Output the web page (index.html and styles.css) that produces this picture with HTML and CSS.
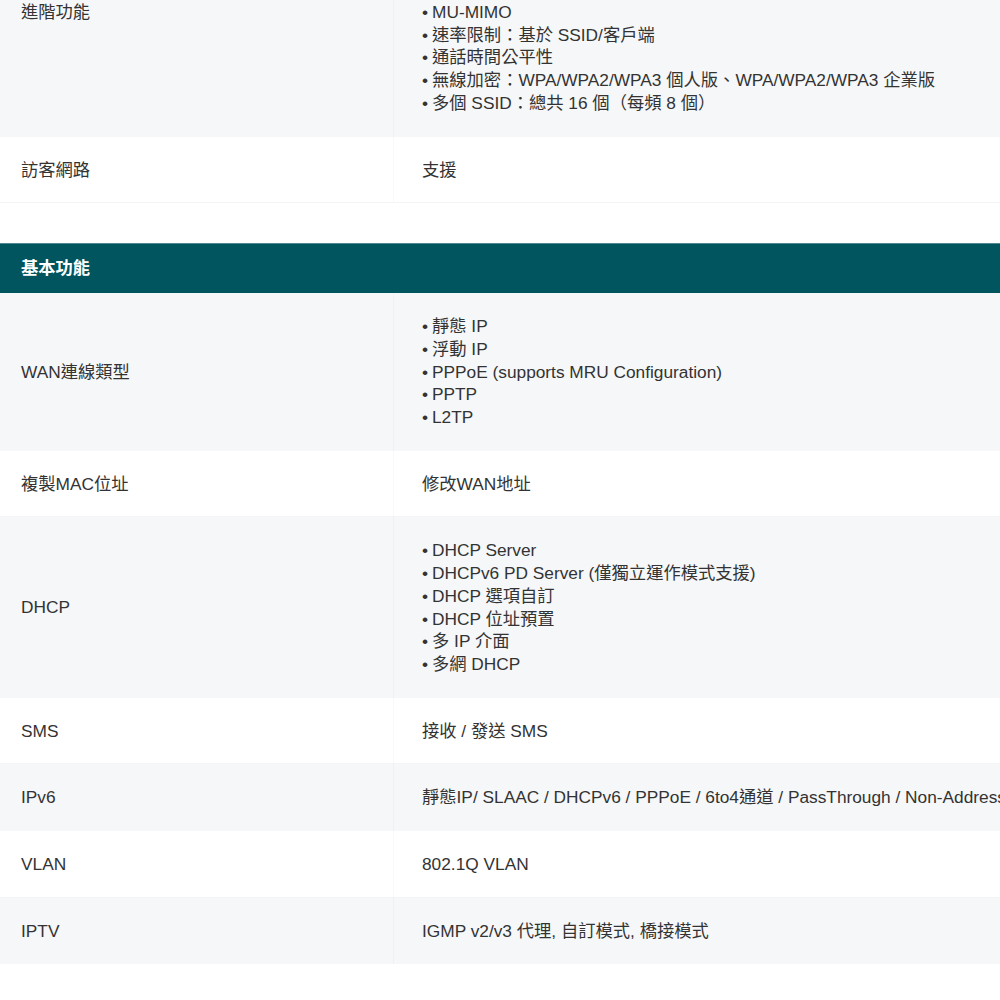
FILE: index.html
```html
<!DOCTYPE html>
<html lang="zh-Hant">
<head>
<meta charset="utf-8">
<title>規格</title>
<link rel="stylesheet" href="styles.css">
</head>
<body>
<div class="spec">
  <div class="row gray first">
    <div class="label">進階功能</div>
    <div class="value">
      <ul class="list">
        <li>MU-MIMO</li>
        <li>速率限制：基於 SSID/客戶端</li>
        <li>通話時間公平性</li>
        <li>無線加密：WPA/WPA2/WPA3 個人版、WPA/WPA2/WPA3 企業版</li>
        <li>多個 SSID：總共 16 個（每頻 8 個）</li>
      </ul>
    </div>
  </div>
  <div class="row white">
    <div class="label">訪客網路</div>
    <div class="value">支援</div>
  </div>

  <div class="section-head">基本功能</div>

  <div class="row gray">
    <div class="label">WAN連線類型</div>
    <div class="value">
      <ul class="list">
        <li>靜態 IP</li>
        <li>浮動 IP</li>
        <li>PPPoE (supports MRU Configuration)</li>
        <li>PPTP</li>
        <li>L2TP</li>
      </ul>
    </div>
  </div>
  <div class="row white">
    <div class="label">複製MAC位址</div>
    <div class="value">修改WAN地址</div>
  </div>
  <div class="row gray">
    <div class="label">DHCP</div>
    <div class="value">
      <ul class="list">
        <li>DHCP Server</li>
        <li>DHCPv6 PD Server (僅獨立運作模式支援)</li>
        <li>DHCP 選項自訂</li>
        <li>DHCP 位址預置</li>
        <li>多 IP 介面</li>
        <li>多網 DHCP</li>
      </ul>
    </div>
  </div>
  <div class="row white">
    <div class="label">SMS</div>
    <div class="value">接收 / 發送 SMS</div>
  </div>
  <div class="row gray">
    <div class="label">IPv6</div>
    <div class="value">靜態IP/ SLAAC / DHCPv6 / PPPoE / 6to4通道 / PassThrough / Non-Address Assignment</div>
  </div>
  <div class="row white">
    <div class="label">VLAN</div>
    <div class="value">802.1Q VLAN</div>
  </div>
  <div class="row gray">
    <div class="label">IPTV</div>
    <div class="value">IGMP v2/v3 代理, 自訂模式, 橋接模式</div>
  </div>
</div>
</body>
</html>
```
FILE: styles.css
```css
html, body {
  margin: 0;
  padding: 0;
  background: #ffffff;
  overflow: hidden;
}

body {
  font-family: "Liberation Sans", Arial, "Noto Sans CJK TC", sans-serif;
  font-size: 17.3px;
  line-height: 22.7px;
  color: #333333;
}

.spec {
  width: 1000px;
}

.row {
  display: grid;
  grid-template-columns: 394px 1fr;
  align-items: stretch;
}

.row.gray {
  background: #f6f7f9;
}

.row.white {
  background: #ffffff;
  box-shadow: inset 0 -1px 0 #f4f5f7;
}

.label {
  display: flex;
  align-items: center;
  padding: 22px 0 22px 21px;
  border-right: 1px solid rgba(0, 0, 0, 0.025);
}

.value {
  display: flex;
  align-items: center;
  padding: 22px 0 22px 28px;
  white-space: nowrap;
  overflow: hidden;
}

.row.first .label,
.row.first .value {
  align-items: flex-start;
  padding-top: 1px;
}

.row.white + .section-head {
  margin-top: 40px;
}

.list {
  list-style: none;
  margin: 0;
  padding: 0;
}

.list li::before {
  content: "•";
  display: inline-block;
  width: 10px;
}

.section-head {
  background: #00555f;
  border-top: 1px solid #4f8890;
  color: #ffffff;
  font-weight: bold;
  height: 49px;
  display: flex;
  align-items: center;
  padding-left: 21px;
}
```
